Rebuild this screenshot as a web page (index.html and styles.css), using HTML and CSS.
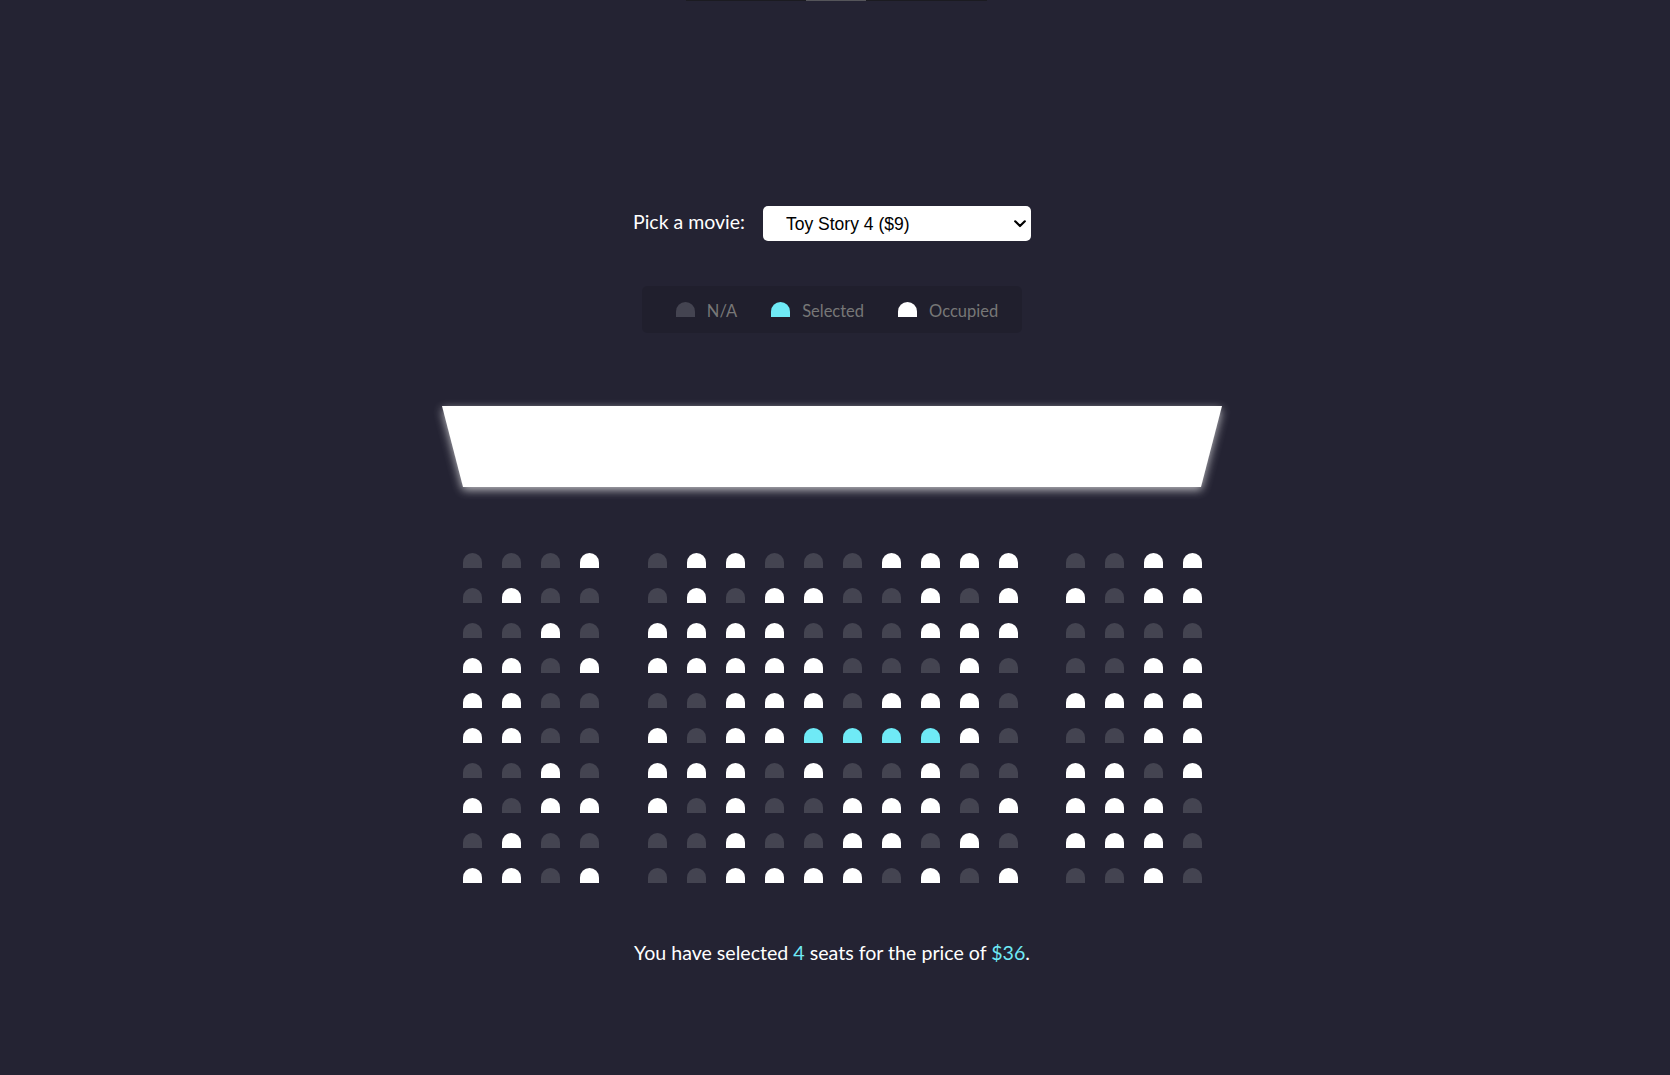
FILE: index.html
```html
<!DOCTYPE html>
<html lang="en">
<head>
<meta charset="UTF-8">
<title>Movie Seat Booking</title>
<link rel="stylesheet" href="styles.css">
</head>
<body>
<div class="topbar"><span class="topbar-thumb"></span></div>

<div class="movie-container">
  <label class="movie-label" for="movie">Pick a movie:</label>
  <div class="select-wrap">
    <select id="movie" class="movie-select">
      <option value="10">Avengers: Endgame ($10)</option>
      <option value="12">Joker ($12)</option>
      <option value="8">Ready or Not ($8)</option>
      <option value="9" selected>Toy Story 4 ($9)</option>
    </select>
    <svg class="select-arrow" width="12" height="8" viewBox="0 0 12 8" aria-hidden="true"><path d="M1.2 1.3 L6 6 L10.8 1.3" fill="none" stroke="#000" stroke-width="2.2" stroke-linecap="round" stroke-linejoin="round"/></svg>
  </div>
</div>

<ul class="showcase">
  <li class="showcase-item"><div class="seat"></div><small>N/A</small></li>
  <li class="showcase-item"><div class="seat selected"></div><small>Selected</small></li>
  <li class="showcase-item"><div class="seat occupied"></div><small>Occupied</small></li>
</ul>

<div class="screen-wrap"><div class="screen"></div></div>

<div class="seats">
  <div class="row"><div class="seat"></div><div class="seat"></div><div class="seat"></div><div class="seat occupied"></div><div class="seat"></div><div class="seat occupied"></div><div class="seat occupied"></div><div class="seat"></div><div class="seat"></div><div class="seat"></div><div class="seat occupied"></div><div class="seat occupied"></div><div class="seat occupied"></div><div class="seat occupied"></div><div class="seat"></div><div class="seat"></div><div class="seat occupied"></div><div class="seat occupied"></div></div>
  <div class="row"><div class="seat"></div><div class="seat occupied"></div><div class="seat"></div><div class="seat"></div><div class="seat"></div><div class="seat occupied"></div><div class="seat"></div><div class="seat occupied"></div><div class="seat occupied"></div><div class="seat"></div><div class="seat"></div><div class="seat occupied"></div><div class="seat"></div><div class="seat occupied"></div><div class="seat occupied"></div><div class="seat"></div><div class="seat occupied"></div><div class="seat occupied"></div></div>
  <div class="row"><div class="seat"></div><div class="seat"></div><div class="seat occupied"></div><div class="seat"></div><div class="seat occupied"></div><div class="seat occupied"></div><div class="seat occupied"></div><div class="seat occupied"></div><div class="seat"></div><div class="seat"></div><div class="seat"></div><div class="seat occupied"></div><div class="seat occupied"></div><div class="seat occupied"></div><div class="seat"></div><div class="seat"></div><div class="seat"></div><div class="seat"></div></div>
  <div class="row"><div class="seat occupied"></div><div class="seat occupied"></div><div class="seat"></div><div class="seat occupied"></div><div class="seat occupied"></div><div class="seat occupied"></div><div class="seat occupied"></div><div class="seat occupied"></div><div class="seat occupied"></div><div class="seat"></div><div class="seat"></div><div class="seat"></div><div class="seat occupied"></div><div class="seat"></div><div class="seat"></div><div class="seat"></div><div class="seat occupied"></div><div class="seat occupied"></div></div>
  <div class="row"><div class="seat occupied"></div><div class="seat occupied"></div><div class="seat"></div><div class="seat"></div><div class="seat"></div><div class="seat"></div><div class="seat occupied"></div><div class="seat occupied"></div><div class="seat occupied"></div><div class="seat"></div><div class="seat occupied"></div><div class="seat occupied"></div><div class="seat occupied"></div><div class="seat"></div><div class="seat occupied"></div><div class="seat occupied"></div><div class="seat occupied"></div><div class="seat occupied"></div></div>
  <div class="row"><div class="seat occupied"></div><div class="seat occupied"></div><div class="seat"></div><div class="seat"></div><div class="seat occupied"></div><div class="seat"></div><div class="seat occupied"></div><div class="seat occupied"></div><div class="seat selected"></div><div class="seat selected"></div><div class="seat selected"></div><div class="seat selected"></div><div class="seat occupied"></div><div class="seat"></div><div class="seat"></div><div class="seat"></div><div class="seat occupied"></div><div class="seat occupied"></div></div>
  <div class="row"><div class="seat"></div><div class="seat"></div><div class="seat occupied"></div><div class="seat"></div><div class="seat occupied"></div><div class="seat occupied"></div><div class="seat occupied"></div><div class="seat"></div><div class="seat occupied"></div><div class="seat"></div><div class="seat"></div><div class="seat occupied"></div><div class="seat"></div><div class="seat"></div><div class="seat occupied"></div><div class="seat occupied"></div><div class="seat"></div><div class="seat occupied"></div></div>
  <div class="row"><div class="seat occupied"></div><div class="seat"></div><div class="seat occupied"></div><div class="seat occupied"></div><div class="seat occupied"></div><div class="seat"></div><div class="seat occupied"></div><div class="seat"></div><div class="seat"></div><div class="seat occupied"></div><div class="seat occupied"></div><div class="seat occupied"></div><div class="seat"></div><div class="seat occupied"></div><div class="seat occupied"></div><div class="seat occupied"></div><div class="seat occupied"></div><div class="seat"></div></div>
  <div class="row"><div class="seat"></div><div class="seat occupied"></div><div class="seat"></div><div class="seat"></div><div class="seat"></div><div class="seat"></div><div class="seat occupied"></div><div class="seat"></div><div class="seat"></div><div class="seat occupied"></div><div class="seat occupied"></div><div class="seat"></div><div class="seat occupied"></div><div class="seat"></div><div class="seat occupied"></div><div class="seat occupied"></div><div class="seat occupied"></div><div class="seat"></div></div>
  <div class="row"><div class="seat occupied"></div><div class="seat occupied"></div><div class="seat"></div><div class="seat occupied"></div><div class="seat"></div><div class="seat"></div><div class="seat occupied"></div><div class="seat occupied"></div><div class="seat occupied"></div><div class="seat occupied"></div><div class="seat"></div><div class="seat occupied"></div><div class="seat"></div><div class="seat occupied"></div><div class="seat"></div><div class="seat"></div><div class="seat occupied"></div><div class="seat"></div></div>
</div>

<p class="text">You have selected <span class="accent">4</span> seats for the price of <span class="accent">$36</span>.</p>
</body>
</html>
```

FILE: styles.css
```css
* {
  box-sizing: border-box;
}

html {
  background-color: #242333;
}

body {
  margin: 0;
  min-height: 100vh;
  padding: 206px 6px 0 0;
  background-color: #242333;
  color: #fff;
  font-family: Lato, "Open Sans", sans-serif;
  display: flex;
  flex-direction: column;
  align-items: center;
}

.topbar {
  position: absolute;
  top: 0;
  left: 686px;
  width: 301px;
  height: 1px;
  background-color: #1b1b21;
}

.topbar-thumb {
  position: absolute;
  top: 0;
  left: 120px;
  width: 60px;
  height: 1px;
  background-color: #55555a;
}

.movie-container {
  display: flex;
  align-items: center;
  height: 35px;
}

.movie-label {
  font-size: 19.5px;
  line-height: 24px;
  margin-right: 18px;
  margin-bottom: 4px;
}

.select-wrap {
  position: relative;
  width: 268px;
  height: 35px;
}

.movie-select {
  -webkit-appearance: none;
  appearance: none;
  width: 100%;
  height: 100%;
  border: 0;
  border-radius: 5px;
  background-color: #fff;
  color: #000;
  font-family: "Liberation Sans", Arial, sans-serif;
  font-size: 17.5px;
  padding: 0 30px 0 23px;
  outline: none;
}

.select-arrow {
  position: absolute;
  right: 5px;
  top: 14px;
  pointer-events: none;
}

.showcase {
  list-style: none;
  margin: 45px 0 0;
  height: 47px;
  padding: 0 24px 0 34px;
  display: flex;
  align-items: center;
  gap: 34px;
  background-color: rgba(0, 0, 0, 0.1);
  border-radius: 5px;
  color: #777;
}

.showcase-item {
  display: flex;
  align-items: center;
  gap: 12px;
}

.showcase-item small {
  font-size: 16.5px;
  line-height: 19px;
  margin-top: 3px;
}

.seat {
  width: 19px;
  height: 15px;
  background-color: #444451;
  border-top-left-radius: 10px;
  border-top-right-radius: 10px;
  flex: none;
}

.seat.selected {
  background-color: #6feaf6;
}

.seat.occupied {
  background-color: #fff;
}

.screen-wrap {
  margin-top: 73px;
  filter: drop-shadow(0 3px 5px rgba(255, 255, 255, 0.7));
}

.screen {
  width: 780px;
  height: 81px;
  background-color: #fff;
  clip-path: polygon(0 0, 100% 0, calc(100% - 21px) 100%, 21px 100%);
}

.seats {
  margin-top: 66px;
  display: flex;
  flex-direction: column;
  gap: 20px;
}

.row {
  display: flex;
  gap: 20px;
}

.row .seat:nth-child(4) {
  margin-right: 29px;
}

.row .seat:nth-child(14) {
  margin-right: 28px;
}

.text {
  margin: 58px 0 0;
  font-size: 19.6px;
  line-height: 24px;
}

.accent {
  color: #6feaf6;
}
```
